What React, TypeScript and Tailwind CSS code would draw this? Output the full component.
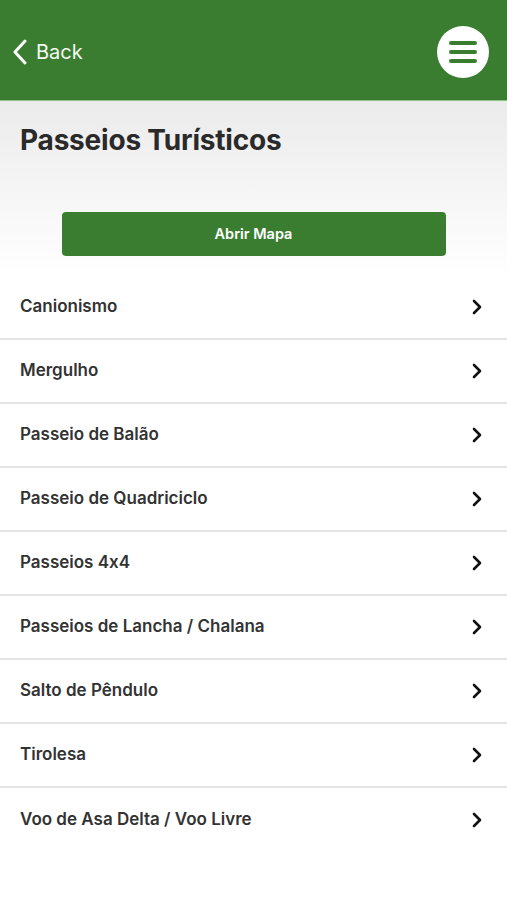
import React from "react";

const items = [
  "Canionismo",
  "Mergulho",
  "Passeio de Balão",
  "Passeio de Quadriciclo",
  "Passeios 4x4",
  "Passeios de Lancha / Chalana",
  "Salto de Pêndulo",
  "Tirolesa",
  "Voo de Asa Delta / Voo Livre",
];

function Chevron() {
  return (
    <svg width="12" height="18" viewBox="0 0 12 18" fill="none">
      <path d="M3 3 L9 9 L3 15" stroke="#111" strokeWidth="2.6" strokeLinecap="round" strokeLinejoin="round" />
    </svg>
  );
}

export default function App() {
  return (
    <div
      className="w-[507px] h-[900px] bg-white overflow-hidden [font-feature-settings:'calt'_0]"
      style={{ fontFamily: "Inter, 'Noto Sans', sans-serif" }}
    >
      <div className="h-[101px] bg-[#3a7d31] flex items-center justify-between pl-[12px] pr-[18px] pt-[4px] border-b border-[#8fc283]">
        <div className="flex items-center gap-[8px] text-white">
          <svg width="16" height="26" viewBox="0 0 16 26" fill="none">
            <path d="M13 2 L3 13 L13 24" stroke="white" strokeWidth="3" strokeLinecap="round" strokeLinejoin="round" />
          </svg>
          <span className="text-[20px] text-[#f4fbf2]">Back</span>
        </div>
        <div className="w-[52px] h-[52px] rounded-full bg-white flex flex-col items-center justify-center gap-[5px]">
          <div className="w-[28px] h-[4px] rounded-full bg-[#3a7d31]" />
          <div className="w-[28px] h-[4px] rounded-full bg-[#3a7d31]" />
          <div className="w-[28px] h-[4px] rounded-full bg-[#3a7d31]" />
        </div>
      </div>
      <div className="bg-gradient-to-b from-[#ebebeb] to-white pt-[21px] pb-[20px]">
        <h1 className="px-[20px] text-[28px] font-bold text-[#2a2a2a] leading-[36px] tracking-[-0.2px]">Passeios Turísticos</h1>
        <div className="flex justify-center mt-[54px]">
          <button className="w-[384px] h-[44px] rounded-[4px] bg-[#3a7d31] text-white text-[14.5px] font-semibold">Abrir Mapa</button>
        </div>
      </div>
      <div>
        {items.map((it, i) => (
          <div
            key={it}
            className={`h-[64px] flex items-center justify-between pl-[20px] pr-[24px] ${i < items.length - 1 ? "border-b-2 border-[#e6e6e6]" : ""}`}
          >
            <span className="text-[17px] font-semibold text-[#333]">{it}</span>
            <Chevron />
          </div>
        ))}
      </div>
    </div>
  );
}
